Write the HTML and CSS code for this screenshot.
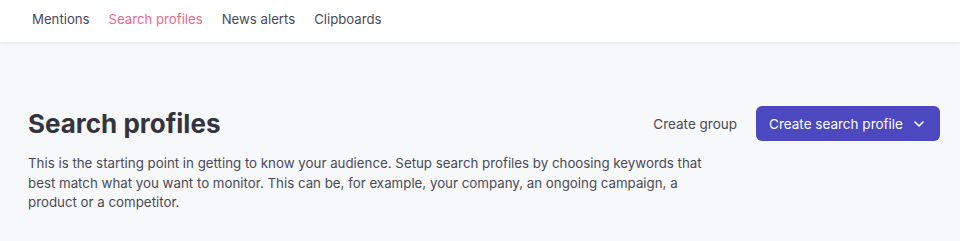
FILE: index.html
```html
<!DOCTYPE html>
<html lang="en">
<head>
<meta charset="utf-8">
<title>Search profiles</title>
<link rel="stylesheet" href="styles.css">
</head>
<body>
<nav class="topnav">
  <a class="nav-item">Mentions</a>
  <a class="nav-item active">Search profiles</a>
  <a class="nav-item">News alerts</a>
  <a class="nav-item">Clipboards</a>
</nav>
<main class="page">
  <div class="header-row">
    <h1 class="title">Search profiles</h1>
    <div class="actions">
      <button class="btn-link">Create group</button>
      <button class="btn-primary">Create search profile
        <svg class="chev" width="12" height="12" viewBox="0 0 12 12"><path d="M2 4 L6 8 L10 4" fill="none" stroke="#fff" stroke-width="1.6" stroke-linecap="round" stroke-linejoin="round"/></svg>
      </button>
    </div>
  </div>
  <p class="intro">This is the starting point in getting to know your audience. Setup search profiles by choosing keywords that best match what you want to monitor. This can be, for example, your company, an ongoing campaign, a product or a competitor.</p>
</main>
</body>
</html>
```
FILE: styles.css
```css
* { box-sizing: border-box; }
html, body { margin: 0; padding: 0; }
body {
  font-family: "Inter", "Noto Sans", sans-serif;
  background: #f7f8fa;
  color: #34343f;
  height: 241px;
  overflow: hidden;
}
.topnav {
  height: 42px;
  background: #fff;
  display: flex;
  align-items: center;
  gap: 19px;
  padding: 0 0 5px 32px;
  box-shadow: 0 1px 3px rgba(40, 40, 80, 0.08);
  position: relative;
}
.nav-item {
  font-size: 13.2px;
  color: #4a4a57;
  cursor: pointer;
}
.nav-item.active { color: #ef6a8b; }
.page {
  padding: 64px 20px 0 28px;
}
.header-row {
  display: flex;
  align-items: center;
  justify-content: space-between;
}
.title {
  margin: 0;
  font-size: 26px;
  font-weight: 700;
  color: #34343f;
}
.actions {
  display: flex;
  align-items: center;
  gap: 19px;
}
.btn-link {
  background: none;
  border: 0;
  font-family: inherit;
  font-size: 13.5px;
  color: #4a4a57;
  padding: 0;
}
.btn-primary {
  font-family: inherit;
  font-size: 13.5px;
  color: #fff;
  background: #4b48c0;
  border: 0;
  border-radius: 6px;
  height: 35px;
  padding: 0 15px 0 13px;
  display: flex;
  align-items: center;
  gap: 10px;
}
.intro {
  margin: 13px 0 0;
  width: 690px;
  font-size: 13.3px;
  line-height: 19.5px;
  color: #4a4a57;
}
```
